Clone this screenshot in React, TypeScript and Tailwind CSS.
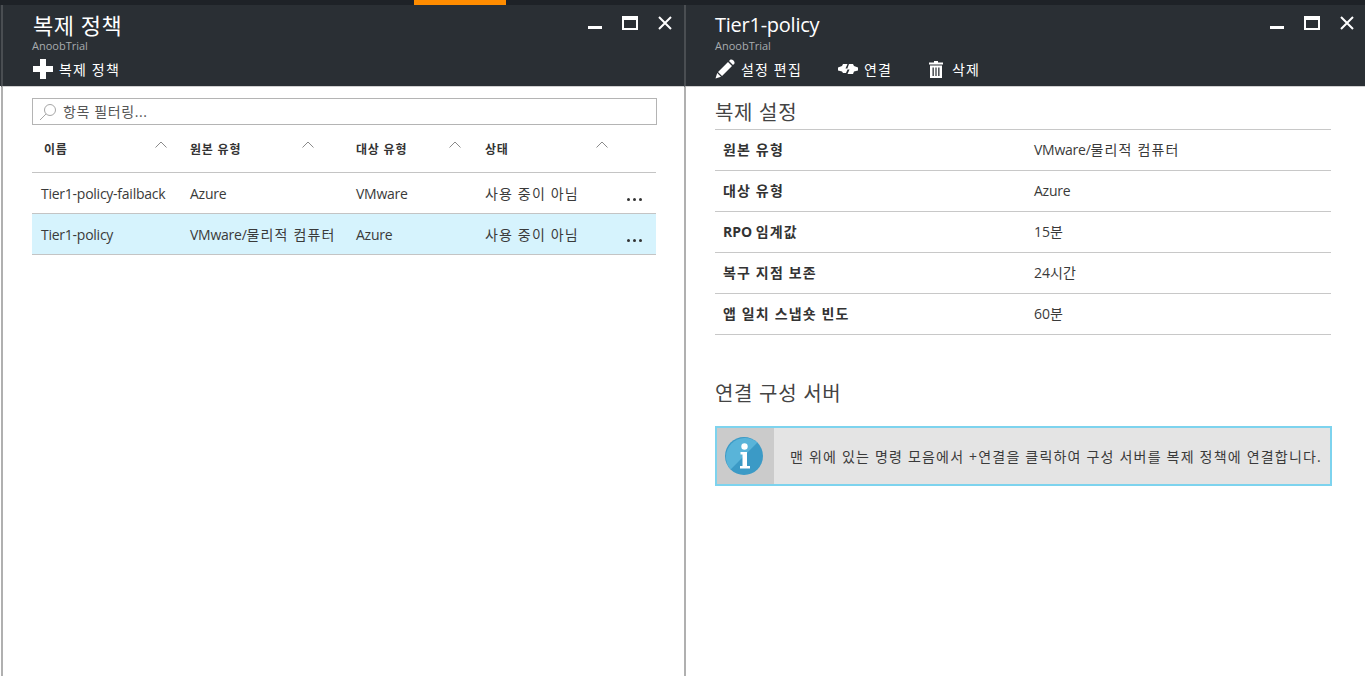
const font = { fontFamily: '"Open Sans","Noto Sans CJK KR",sans-serif' };

function WindowButtons() {
  return (
    <div className="flex items-start gap-[20px] pt-[11px]">
      <svg width="14" height="14" viewBox="0 0 14 14"><rect x="0" y="10" width="14" height="3" fill="#fff" /></svg>
      <svg width="16" height="14" viewBox="0 0 16 14"><path d="M0 0H16V14H0Z M2 4V12H14V4Z" fill="#fff" fillRule="evenodd" /></svg>
      <svg width="14" height="14" viewBox="0 0 14 14"><path d="M1 1L13 13M13 1L1 13" stroke="#fff" strokeWidth="2" fill="none" /></svg>
    </div>
  );
}

function Chevron() {
  return (
    <svg width="12" height="7" viewBox="0 0 12 7"><path d="M0.5 6.5L6 1L11.5 6.5" stroke="#8a8a8a" strokeWidth="1" fill="none" /></svg>
  );
}

function Dots() {
  return (
    <div className="flex gap-[3px] mt-[13px]">
      <span className="w-[3px] h-[3px] rounded-full bg-[#333]" />
      <span className="w-[3px] h-[3px] rounded-full bg-[#333]" />
      <span className="w-[3px] h-[3px] rounded-full bg-[#333]" />
    </div>
  );
}

function Ko({ children }: { children: React.ReactNode }) {
  return <span className="tracking-[1.15px]">{children}</span>;
}

function La({ children }: { children: React.ReactNode }) {
  return <span className="tracking-[-0.25px]">{children}</span>;
}

function Row({ cells, selected }: { cells: React.ReactNode[]; selected?: boolean }) {
  return (
    <div className={`flex h-[41px] items-center border-b border-[#c4c4c4] text-[14px] text-[#3a3a3a] ${selected ? "bg-[#d6f3fd]" : ""}`}>
      <div className="w-[158px] pl-[9px] whitespace-nowrap">{cells[0]}</div>
      <div className="w-[166px] whitespace-nowrap">{cells[1]}</div>
      <div className="w-[129px] whitespace-nowrap">{cells[2]}</div>
      <div className="w-[142px] whitespace-nowrap">{cells[3]}</div>
      <Dots />
    </div>
  );
}

function HeadCell({ label, w, pr }: { label: string; w: string; pr: string }) {
  return (
    <div className={`${w} ${pr} flex items-start justify-between`}>
      <span className="text-[12px] font-bold text-[#333] pt-[11px] whitespace-nowrap tracking-[0.8px]">{label}</span>
      <span className="pt-[11px]"><Chevron /></span>
    </div>
  );
}

function Setting({ k, v }: { k: React.ReactNode; v: React.ReactNode }) {
  return (
    <div className="flex h-[41px] items-center border-b border-[#c8c8c8] pb-[2px] text-[14px] text-[#3a3a3a]">
      <div className="w-[319px] pl-[8px] font-bold text-[#333] whitespace-nowrap">{k}</div>
      <div className="whitespace-nowrap">{v}</div>
    </div>
  );
}

function Cmd({ icon, label, w }: { icon: React.ReactNode; label: string; w: string }) {
  return (
    <div className={`${w} flex items-center`}>
      {icon}
      <span className="text-[14px] text-white whitespace-nowrap tracking-[1.15px]">{label}</span>
    </div>
  );
}

export default function App() {
  return (
    <div className="w-[1365px] h-[676px] overflow-hidden flex flex-col bg-white" style={font}>
      <div className="h-[5px] shrink-0 bg-[#1e2227] pl-[414px]">
        <div className="w-[92px] h-[5px] bg-[#ff8c00]" />
      </div>
      <div className="flex flex-1 min-h-0">
        {/* left edge */}
        <div className="w-px shrink-0 flex flex-col">
          <div className="h-[81px] bg-[#2a2f34]" />
        </div>
        {/* left blade */}
        <div className="w-[683px] shrink-0 flex flex-col">
          <div className="h-[82px] shrink-0 bg-[#2a2f34] border-l-2 border-l-[#4a4e52] border-b border-b-[#d0d0d0] flex justify-between pl-[30px] pr-[12px]">
            <div className="flex flex-col">
              <div className="text-[22px] leading-[28px] text-white pt-[6px] h-[34px] whitespace-nowrap tracking-[0.5px]">복제 정책</div>
              <div className="text-[11px] leading-[14px] text-[#a8acaf] -ml-px">AnoobTrial</div>
              <div className="flex items-center mt-[6px] h-[20px]">
                <svg width="20" height="20" viewBox="0 0 20 20" className="mr-[6px]"><path d="M7 0H13V7H20V13H13V20H7V13H0V7H7Z" fill="#fff" /></svg>
                <span className="text-[14px] text-white whitespace-nowrap tracking-[1.15px]">복제 정책</span>
              </div>
            </div>
            <WindowButtons />
          </div>
          <div className="flex-1 border-l-2 border-[#b0b0b0] pl-[29px] pr-[28px] pt-[11px]">
            <div className="h-[27px] -mr-px border border-[#b4b4b4] flex items-center pl-[6px]">
              <svg width="18" height="18" viewBox="0 0 18 18" className="mr-[6px]"><circle cx="11" cy="7" r="5.5" fill="none" stroke="#a6a6a6" /><path d="M7 11L1 17" stroke="#a6a6a6" /></svg>
              <span className="text-[14px] text-[#555] whitespace-nowrap tracking-[0.6px]">항목 필터링...</span>
            </div>
            <div className="flex h-[43px] mt-[5px] border-b border-[#c4c4c4] pl-[12px]">
              <HeadCell label="이름" w="w-[146px]" pr="pr-[23px]" />
              <HeadCell label="원본 유형" w="w-[166px]" pr="pr-[42px]" />
              <HeadCell label="대상 유형" w="w-[129px]" pr="pr-[24px]" />
              <HeadCell label="상태" w="w-[147px]" pr="pr-[24px]" />
            </div>
            <Row cells={[<La>Tier1-policy-failback</La>, <La>Azure</La>, <La>VMware</La>, <Ko>사용 중이 아님</Ko>]} />
            <Row selected cells={[<La>Tier1-policy</La>, <><La>VMware/</La><Ko>물리적 컴퓨터</Ko></>, <La>Azure</La>, <Ko>사용 중이 아님</Ko>]} />
          </div>
        </div>
        {/* right blade */}
        <div className="flex-1 flex flex-col">
          <div className="h-[82px] shrink-0 bg-[#2a2f34] border-b border-b-[#d0d0d0] flex justify-between pl-[29px] pr-[11px] border-l-2 border-l-[#4a4e52]">
            <div className="flex flex-col">
              <div className="text-[20px] leading-[28px] text-white pt-[6px] h-[34px] whitespace-nowrap tracking-[-0.25px]">Tier1-policy</div>
              <div className="text-[11px] leading-[14px] text-[#a8acaf]">AnoobTrial</div>
              <div className="flex items-center mt-[6px] h-[20px]">
                <Cmd
                  w="w-[123px]"
                  label="설정 편집"
                  icon={<svg width="20" height="20" viewBox="0 0 20 20" className="mr-[6px]"><path d="M15.5 0.5Q17 0 18.5 1.5Q20 3 19.5 4.5L18 6L14 2Z M13 3L17 7L7 17L3 13Z M2.2 14L6 17.8L0.5 19.5Z" fill="#fff" /></svg>}
                />
                <Cmd
                  w="w-[91px]"
                  label="연결"
                  icon={<svg width="20" height="12" viewBox="0 0 20 12" className="mr-[6px]"><path d="M0 4.5L4 3L5 1H9.5L7.5 5.5H10L8 10H5L4 8.5L0 7.5Z M11 1H15L16 3L20 4.5V7.5L16 8.5L15 11H9.5L11.5 6.5H9Z" fill="#fff" /></svg>}
                />
                <Cmd
                  w="w-[60px]"
                  label="삭제"
                  icon={<svg width="14" height="17" viewBox="0 0 14 17" className="mr-[9px]"><path d="M5 0H9V1.5H14V3.5H0V1.5H5Z M1 4.5H13V17H1Z M3.5 6.5V15H4.8V6.5Z M6.4 6.5V15H7.6V6.5Z M9.2 6.5V15H10.5V6.5Z" fill="#fff" fillRule="evenodd" /></svg>}
                />
              </div>
            </div>
            <WindowButtons />
          </div>
          <div className="flex-1 border-l-2 border-[#b0b0b0] pl-[29px] pr-[34px]">
            <div className="text-[20px] leading-[28px] text-[#444] pt-[12px] h-[43px] border-b border-[#c8c8c8] whitespace-nowrap tracking-[0.7px]">복제 설정</div>
            <Setting k={<Ko>원본 유형</Ko>} v={<><La>VMware/</La><Ko>물리적 컴퓨터</Ko></>} />
            <Setting k={<Ko>대상 유형</Ko>} v={<La>Azure</La>} />
            <Setting k={<><span>RPO </span><Ko>임계값</Ko></>} v={<span>15분</span>} />
            <Setting k={<Ko>복구 지점 보존</Ko>} v={<span>24시간</span>} />
            <Setting k={<Ko>앱 일치 스냅숏 빈도</Ko>} v={<span>60분</span>} />
            <div className="text-[20px] leading-[28px] text-[#444] mt-[45px] whitespace-nowrap tracking-[0.7px]">연결 구성 서버</div>
            <div className="mt-[18px] -mr-px h-[60px] border-2 border-[#7dd3ee] flex bg-[#e4e4e4]">
              <div className="w-[57px] shrink-0 bg-[#cbcbcb] flex items-center pl-[8px]">
                <svg width="38" height="38" viewBox="0 0 38 38">
                  <circle cx="19" cy="19" r="19" fill="#3b9ac6" />
                  <path d="M32.4 5.6A19 19 0 0 0 5.6 32.4Z" fill="#59b4d9" />
                  <circle cx="19.5" cy="9.5" r="3.2" fill="#fff" />
                  <path d="M15.5 15H22V29H25V31.5H15V29H17.5V17.5H15.5Z" fill="#fff" />
                </svg>
              </div>
              <div className="flex-1 flex items-center pl-[16px] text-[14px] text-[#3a3a3a] whitespace-nowrap overflow-hidden tracking-[1.2px]">
                맨 위에 있는 명령 모음에서 +연결을 클릭하여 구성 서버를 복제 정책에 연결합니다.
              </div>
            </div>
          </div>
        </div>
      </div>
    </div>
  );
}
